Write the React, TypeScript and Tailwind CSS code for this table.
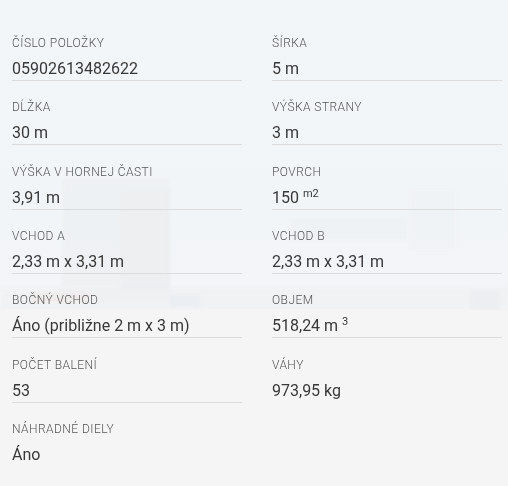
import type { ReactNode } from "react"

type Spec = { label: string; value: ReactNode; line?: boolean }

const SPECS: Spec[] = [
  { label: "Číslo položky", value: "05902613482622" },
  { label: "Šírka", value: "5 m" },
  { label: "Dĺžka", value: "30 m" },
  { label: "Výška strany", value: "3 m" },
  { label: "Výška v hornej časti", value: "3,91 m" },
  { label: "Povrch", value: <>150 <sup className="text-[11px] top-[-0.55em]">m2</sup></> },
  { label: "Vchod A", value: "2,33 m x 3,31 m" },
  { label: "Vchod B", value: "2,33 m x 3,31 m" },
  { label: "Bočný vchod", value: "Áno (približne 2 m x 3 m)" },
  { label: "Objem", value: <>518,24 m <sup className="text-[11px] top-[-0.55em]">3</sup></> },
  { label: "Počet balení", value: "53" },
  { label: "Váhy", value: "973,95 kg", line: false },
  { label: "Náhradné diely", value: "Áno", line: false },
]

// washed-out photo behind the table
function Backdrop() {
  return (
    <svg className="absolute inset-0 h-full w-full" viewBox="0 0 508 486" preserveAspectRatio="none">
      <defs>
        <linearGradient id="sky" x1="0" y1="0" x2="0" y2="1">
          <stop offset="0" stopColor="#f3f6f9" />
          <stop offset="0.45" stopColor="#f2f5f8" />
          <stop offset="1" stopColor="#f5f5f5" />
        </linearGradient>
        <filter id="soft" x="-10%" y="-10%" width="120%" height="120%">
          <feGaussianBlur stdDeviation="1.5" />
        </filter>
      </defs>
      <rect width="508" height="486" fill="url(#sky)" />
      <g filter="url(#soft)" opacity="0.8">
        <rect x="62" y="178" width="108" height="125" fill="#eceef0" opacity="0.7" />
        <rect x="120" y="190" width="50" height="100" fill="#e8eaec" opacity="0.5" />
        <rect x="290" y="218" width="118" height="22" fill="#eceef0" opacity="0.6" />
        <rect x="410" y="190" width="46" height="60" fill="#eef0f1" opacity="0.6" />
        <rect x="0" y="288" width="508" height="22" fill="#eeeff0" opacity="0.6" />
        <rect x="30" y="292" width="60" height="10" fill="#efe6e5" opacity="0.6" />
        <rect x="170" y="295" width="30" height="12" fill="#e5ebf1" opacity="0.6" />
        <rect x="470" y="290" width="30" height="20" fill="#e8eaec" opacity="0.6" />
      </g>
      <rect x="0" y="310" width="508" height="176" fill="#f5f5f5" opacity="0.9" />
    </svg>
  )
}

export default function App() {
  return (
    <div className="relative h-[486px] w-[508px] overflow-hidden font-['Roboto',sans-serif]">
      <Backdrop />
      <div className="relative grid grid-cols-[230px_230px] gap-x-[30px] gap-y-[18.33px] px-3 pt-[35px]">
        {SPECS.map(s => (
          <div key={s.label}>
            <div className="text-[12px] leading-4 uppercase font-light tracking-[0.45px] text-[#555]">{s.label}</div>
            <div
              className={
                "mt-[7px] text-[16px] leading-[22px] text-[#383838] " +
                (s.line === false ? "border-b border-transparent" : "border-b border-[#dcdcdc]")
              }
            >
              {s.value}
            </div>
          </div>
        ))}
      </div>
    </div>
  )
}
